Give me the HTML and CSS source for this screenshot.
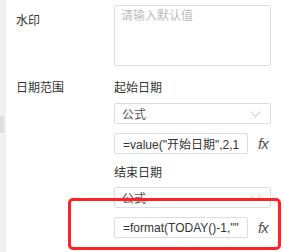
FILE: index.html
```html
<!DOCTYPE html>
<html lang="zh-CN">
<head>
  <meta charset="UTF-8" />
  <title>默认值设置</title>
  <link rel="stylesheet" href="styles.css">
</head>
<body>
  <div class="page">
    <div class="rail">
      <div class="rail-thumb"></div>
    </div>

    <div class="props">
      <!-- 水印 -->
      <div class="prop-row">
        <div class="prop-label watermark-label">水印</div>
        <div class="prop-field">
          <textarea class="text-area" placeholder="请输入默认值"></textarea>
        </div>
      </div>

      <!-- 日期范围 -->
      <div class="prop-row date-row">
        <div class="prop-label">日期范围</div>
        <div class="prop-field">
          <div class="sub-label">起始日期</div>
          <div class="select-box">
            <span>公式</span>
            <svg class="chevron" width="11" height="6" viewBox="0 0 11 6"><path d="M0.5 0.5 L5.5 5.5 L10.5 0.5" fill="none" stroke="#c4c4c4" stroke-width="1"/></svg>
          </div>
          <div class="formula-line">
            <input class="formula-input" type="text" value='=value("开始日期",2,1)' />
            <span class="fx-btn">fx</span>
          </div>

          <div class="sub-label end-label">结束日期</div>
          <div class="select-box">
            <span>公式</span>
            <svg class="chevron" width="11" height="6" viewBox="0 0 11 6"><path d="M0.5 0.5 L5.5 5.5 L10.5 0.5" fill="none" stroke="#c4c4c4" stroke-width="1"/></svg>
          </div>
          <div class="formula-line">
            <input class="formula-input" type="text" value='=format(TODAY()-1,"")' />
            <span class="fx-btn">fx</span>
          </div>
        </div>
      </div>
    </div>

    <!-- highlight annotation -->
    <div class="mark-box"></div>
  </div>
</body>
</html>
```

FILE: styles.css
```css
html, body {
  margin: 0;
  padding: 0;
  background: #fff;
  overflow: hidden;
}

body {
  font-family: 'Liberation Sans', 'Noto Sans CJK SC', sans-serif;
  font-size: 12px;
  color: #333;
}

.page {
  position: relative;
  display: flex;
  height: 252px;
}

.rail {
  width: 6px;
  background: #f0f0f0;
  flex-shrink: 0;
}

.rail-thumb {
  width: 4px;
  height: 17px;
  margin-top: 116px;
  background: #dedede;
  border-radius: 1px;
}

.props {
  flex: 1;
  padding: 5px 0 0 10px;
}

.prop-row {
  display: flex;
}

.prop-label {
  width: 98px;
  flex-shrink: 0;
  line-height: 20px;
  color: #333;
}

.watermark-label {
  padding-top: 6px;
}

.prop-field {
  width: 157px;
  display: flex;
  flex-direction: column;
}

.text-area {
  box-sizing: border-box;
  width: 157px;
  height: 61px;
  margin: 0;
  padding: 2px 6px;
  border: 1px solid #dcdcdc;
  border-radius: 2px;
  font-family: inherit;
  font-size: 12px;
  line-height: 16px;
  color: #333;
  resize: none;
  outline: none;
}

.text-area::placeholder {
  color: #bdbdbd;
}

.date-row {
  margin-top: 12px;
}

.sub-label {
  line-height: 20px;
  color: #333;
  margin-bottom: 5px;
}

.end-label {
  margin-top: 9px;
  margin-bottom: 4px;
}

.select-box {
  box-sizing: border-box;
  height: 21px;
  display: flex;
  align-items: center;
  justify-content: space-between;
  padding: 0 9px 0 7px;
  border: 1px solid #dcdcdc;
  border-radius: 2px;
  color: #555;
}

.chevron {
  display: block;
}

.formula-line {
  display: flex;
  align-items: center;
  margin-top: 9px;
  width: 160px;
}

.formula-input {
  box-sizing: border-box;
  width: 134px;
  height: 21px;
  margin: 0;
  padding: 0 8px;
  border: 1px solid #dcdcdc;
  border-radius: 2px;
  font-family: inherit;
  font-size: 12px;
  color: #333;
  outline: none;
}

.fx-btn {
  margin-left: 10px;
  font-family: 'Liberation Sans', sans-serif;
  font-style: italic;
  font-size: 15px;
  letter-spacing: -1px;
  color: #555;
  line-height: 20px;
}

.mark-box {
  position: absolute;
  left: 68px;
  top: 198px;
  width: 207px;
  height: 46px;
  border: 3px solid #ff2222;
  border-radius: 5px;
}
```
